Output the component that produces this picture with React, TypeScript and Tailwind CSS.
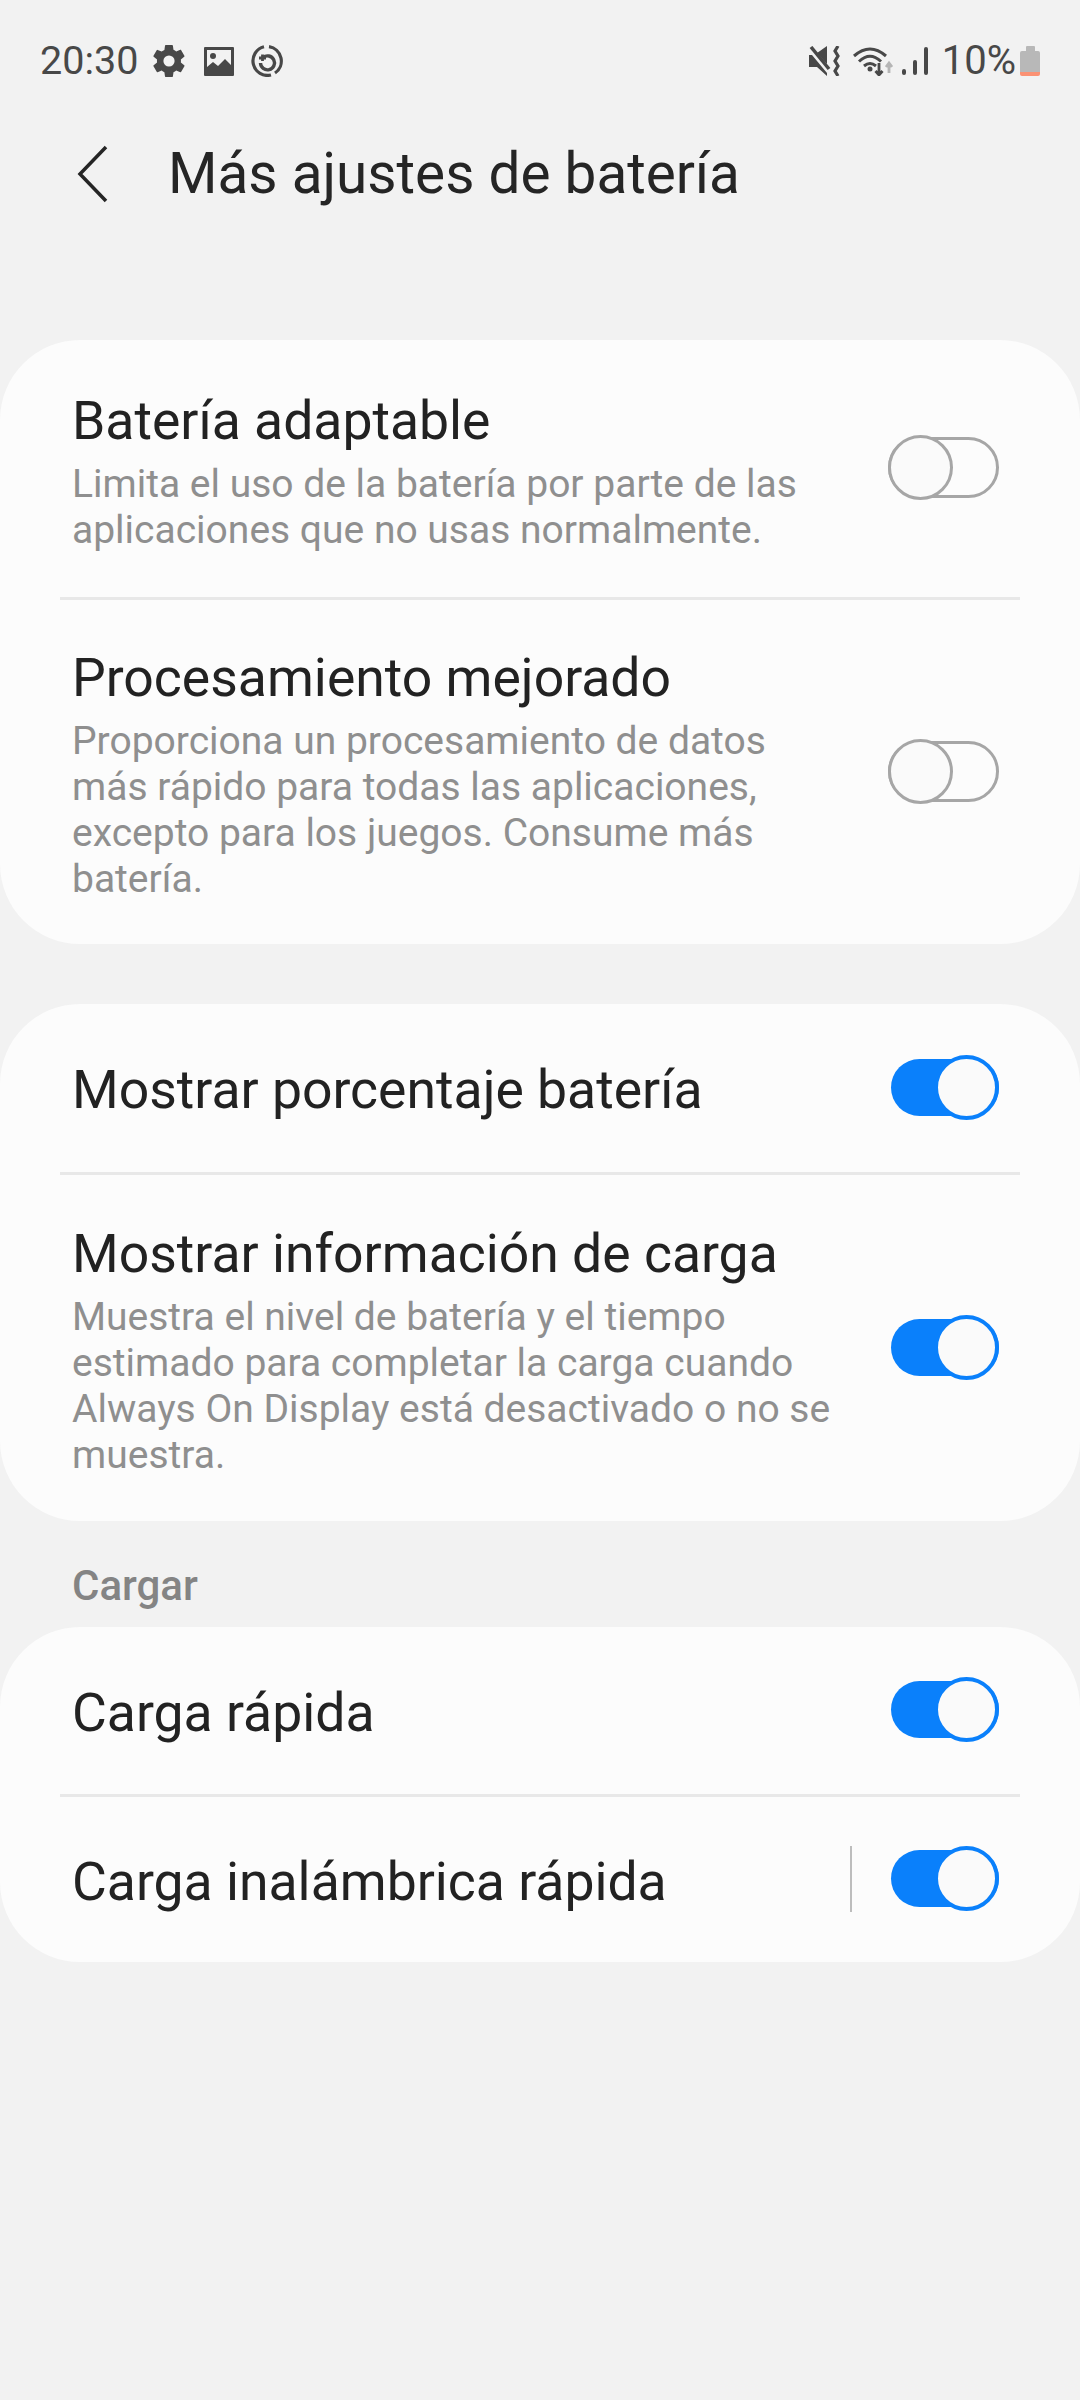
import React from 'react';

const Toggle = ({ on }: { on: boolean }) =>
  on ? (
    <div className="relative w-[108px] h-[65px] mb-[6px] shrink-0 flex items-center">
      <div className="w-full h-[57px] rounded-full bg-[#0a80fb]" />
      <div className="absolute right-0 top-0 w-[65px] h-[65px] rounded-full border-[4px] border-[#0a80fb] bg-[#fafafa]" />
    </div>
  ) : (
    <div className="relative w-[111px] h-[65px] mb-[6px] shrink-0 flex items-center">
      <div className="w-full h-[61px] rounded-full border-[3px] border-[#a6a6a6]" />
      <div className="absolute left-0 top-0 w-[65px] h-[65px] rounded-full border-[3px] border-[#a6a6a6] bg-[#fafafa]" />
    </div>
  );

const Divider = () => <div className="mx-[60px] h-[3px] bg-[#e8e8e8]" />;

const Row = ({
  title,
  lines,
  on,
  className,
  bar,
}: {
  title: string;
  lines?: string[];
  on: boolean;
  className: string;
  bar?: boolean;
}) => (
  <div className={`flex items-center pl-[72px] pr-[81px] pt-[4px] ${className}`}>
    <div className="flex-1 min-w-0">
      <div className="text-[53.5px] leading-[64px] text-[#222222]">{title}</div>
      {lines && (
        <div className="text-[39px] leading-[46px] text-[#8f8f8f] mt-[8px]">
          {lines.map((l) => (
            <div key={l}>{l}</div>
          ))}
        </div>
      )}
    </div>
    {bar && <div className="w-[2px] h-[66px] bg-[#bdbdbd] mr-[39px] mb-[6px]" />}
    <Toggle on={on} />
  </div>
);

export default function App() {
  return (
    <div className="w-[1080px] h-[2400px] bg-[#f2f2f2] overflow-hidden font-['Roboto',sans-serif]">
      {/* status bar */}
      <div className="h-[60px] pt-[31px] flex items-center justify-between pl-[40px] pr-[40px] box-content text-[#484848]">
        <div className="flex items-center">
          <span className="text-[39.5px] leading-[46px]">20:30</span>
          <svg width="32" height="32" viewBox="2 2 20 20" className="ml-[15px]" fill="#484848">
            <path d="M19.4 13c.04-.33.06-.66.06-1s-.02-.67-.06-1l2.1-1.65c.2-.15.25-.42.12-.64l-2-3.46c-.12-.22-.38-.3-.6-.22l-2.5 1a7.3 7.3 0 0 0-1.72-1l-.38-2.65A.5.5 0 0 0 13.93 2H10a.5.5 0 0 0-.5.42L9.13 5.07c-.62.25-1.18.6-1.72 1l-2.5-1a.5.5 0 0 0-.6.22l-2 3.46c-.13.22-.07.49.12.64L4.53 11a8 8 0 0 0 0 2l-2.1 1.65a.5.5 0 0 0-.12.64l2 3.46c.12.22.38.3.6.22l2.5-1c.54.4 1.1.75 1.72 1l.37 2.65c.05.24.26.42.5.42h3.93c.25 0 .46-.18.5-.42l.38-2.65c.62-.25 1.18-.6 1.72-1l2.5 1c.22.08.48 0 .6-.22l2-3.46a.5.5 0 0 0-.12-.64L19.4 13zM12 15.500a3.500 3.500 0 1 1 0-7 3.500 3.500 0 0 1 0 7z" />
          </svg>
          <svg width="30" height="29" viewBox="0 0 30 29" className="ml-[19px]">
            <path fillRule="evenodd" fill="#484848" d="M1 0h28a1 1 0 0 1 1 1v27a1 1 0 0 1-1 1H1a1 1 0 0 1-1-1V1a1 1 0 0 1 1-1zM3 3v17l6-5 5 4 7-7 6 6V3z" />
            <circle cx="9" cy="9" r="3" fill="#484848" />
          </svg>
          <svg width="32" height="32" viewBox="0 0 32 32" className="ml-[17px]" fill="none" stroke="#484848">
            <path d="M18 1.700A14.500 14.500 0 0 1 24 28M20 30A14.500 14.500 0 0 1 13 1.800" strokeWidth="3.200" />
            <path d="M12 12.500A7 7 0 1 1 9.500 18" strokeWidth="3.400" />
            <path d="M8 13h7M11.500 9.500V16" strokeWidth="2.800" />
          </svg>
        </div>
        <div className="flex items-center">
          <svg width="31" height="30" viewBox="0 0 31 30" fill="#484848">
            <path d="M0 9h3l15 18v3L8 21H0z" />
            <path d="M8 7l10-7v18z" />
            <path d="M2 1l18 22" fill="none" stroke="#484848" strokeWidth="3.500" />
            <path d="M29 0l-3 5 3 5-3 5 3 5-3 5 3 5" fill="none" stroke="#484848" strokeWidth="3.200" />
          </svg>
          <svg width="40" height="30" viewBox="0 0 40 30" className="ml-[13px]" fill="none">
            <path d="M1 10Q17-4 33 10M6 15.500Q17 5 28 15.500M11 20Q17 15 23 20" stroke="#484848" strokeWidth="3" />
            <circle cx="17" cy="23" r="2.500" fill="#484848" />
            <path d="M26 17v12M22.500 25l3.500 4 3.500-4" stroke="#484848" strokeWidth="2.800" />
            <path d="M36 27V17M33 21l3-4 3 4" stroke="#b5b5b5" strokeWidth="2.800" />
          </svg>
          <svg width="26" height="28" viewBox="0 0 26 28" className="ml-[9px]" fill="#484848">
            <rect x="0" y="22" width="4" height="6" rx="2" />
            <rect x="11" y="13" width="4" height="15" rx="2" />
            <rect x="22" y="0" width="4" height="28" rx="2" />
          </svg>
          <span className="text-[40px] leading-[46px] ml-[14px]">10%</span>
          <div className="ml-[4px] flex flex-col items-center w-[20px]">
            <div className="w-[9px] h-[5px] bg-[#b8b8b8] rounded-t-[1px]" />
            <div className="w-[20px] h-[21px] bg-[#b8b8b8] rounded-t-[2px]" />
            <div className="w-[20px] h-[4px] bg-[#fb9274] rounded-b-[2px]" />
          </div>
        </div>
      </div>

      {/* header */}
      <div className="flex items-center h-[80px] mt-[43px] pl-[76px]">
        <svg width="34" height="58" viewBox="0 0 34 58" fill="none" stroke="#252525" strokeWidth="3.500">
          <path d="M30 2L4 29l26 27" />
        </svg>
        <h1 className="ml-[58px] text-[56.700px] leading-[64px] text-[#252525] font-normal">Más ajustes de batería</h1>
      </div>

      <div className="mt-[126px] rounded-[80px] bg-[#fcfcfc]">
        <Row
          className="h-[257px]"
          title="Batería adaptable"
          lines={['Limita el uso de la batería por parte de las', 'aplicaciones que no usas normalmente.']}
          on={false}
        />
        <Divider />
        <Row
          className="h-[344px]"
          title="Procesamiento mejorado"
          lines={[
            'Proporciona un procesamiento de datos',
            'más rápido para todas las aplicaciones,',
            'excepto para los juegos. Consume más',
            'batería.',
          ]}
          on={false}
        />
      </div>

      <div className="mt-[60px] rounded-[80px] bg-[#fcfcfc]">
        <Row className="h-[168px]" title="Mostrar porcentaje batería" on={true} />
        <Divider />
        <Row
          className="h-[346px]"
          title="Mostrar información de carga"
          lines={[
            'Muestra el nivel de batería y el tiempo',
            'estimado para completar la carga cuando',
            'Always On Display está desactivado o no se',
            'muestra.',
          ]}
          on={true}
        />
      </div>

      <div className="pl-[72px] pt-[42px] h-[106px] text-[42px] leading-[46px] font-medium text-[#848484]">Cargar</div>

      <div className="rounded-[80px] bg-[#fcfcfc]">
        <Row className="h-[167px]" title="Carga rápida" on={true} />
        <Divider />
        <Row className="h-[165px]" title="Carga inalámbrica rápida" on={true} bar />
      </div>
    </div>
  );
}
